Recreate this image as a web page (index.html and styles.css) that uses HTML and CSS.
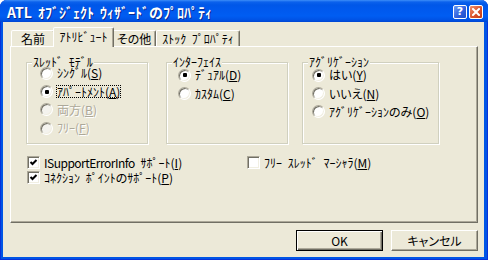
FILE: index.html
```html
<!DOCTYPE html>
<html lang="ja">
<head>
<meta charset="utf-8">
<title>ATL ｵﾌﾞｼﾞｪｸﾄ ｳｨｻﾞｰﾄﾞのﾌﾟﾛﾊﾟﾃｨ</title>
<link rel="stylesheet" href="styles.css">
</head>
<body>
<div class="window">
  <div class="titlebar">
    <span class="title">ATL ｵﾌﾞｼﾞｪｸﾄ ｳｨｻﾞｰﾄﾞのﾌﾟﾛﾊﾟﾃｨ</span>
    <span class="tb help">?</span>
    <span class="tb close"><svg width="8" height="8" viewBox="0 0 8 8"><path d="M1 1L7 7M7 1L1 7" stroke="#fff" stroke-width="2" stroke-linecap="square"/></svg></span>
  </div>
  <div class="client">
    <div class="tabs">
      <div class="tab t-name">名前</div>
      <div class="tab t-attr sel">ｱﾄﾘﾋﾞｭｰﾄ</div>
      <div class="tab t-misc">その他</div>
      <div class="tab t-stock">ｽﾄｯｸ ﾌﾟﾛﾊﾟﾃｨ</div>
    </div>
    <div class="panel">
      <div class="groups">
        <div class="grp g1">
          <span class="legend">ｽﾚｯﾄﾞ ﾓﾃﾞﾙ</span>
          <div class="opts">
            <div class="opt"><span class="rb"></span><span class="lbl">ｼﾝｸﾞﾙ(<u>S</u>)</span></div>
            <div class="opt"><span class="rb on"></span><span class="lbl focus">ｱﾊﾟｰﾄﾒﾝﾄ(<u>A</u>)</span></div>
            <div class="opt dis"><span class="rb"></span><span class="lbl">両方(<u>B</u>)</span></div>
            <div class="opt dis"><span class="rb"></span><span class="lbl">ﾌﾘｰ(<u>F</u>)</span></div>
          </div>
        </div>
        <div class="grp g2">
          <span class="legend">ｲﾝﾀｰﾌｪｲｽ</span>
          <div class="opts">
            <div class="opt"><span class="rb on"></span><span class="lbl">ﾃﾞｭｱﾙ(<u>D</u>)</span></div>
            <div class="opt"><span class="rb"></span><span class="lbl">ｶｽﾀﾑ(<u>C</u>)</span></div>
          </div>
        </div>
        <div class="grp g3">
          <span class="legend">ｱｸﾞﾘｹﾞｰｼｮﾝ</span>
          <div class="opts">
            <div class="opt"><span class="rb on"></span><span class="lbl">はい(<u>Y</u>)</span></div>
            <div class="opt"><span class="rb"></span><span class="lbl">いいえ(<u>N</u>)</span></div>
            <div class="opt"><span class="rb"></span><span class="lbl">ｱｸﾞﾘｹﾞｰｼｮﾝのみ(<u>O</u>)</span></div>
          </div>
        </div>
      </div>
      <div class="checks">
        <div class="chk"><span class="cb"><svg width="9" height="9" viewBox="0 0 9 9"><path d="M1.5 4L3.5 6L7.5 2" fill="none" stroke="#000" stroke-width="2"/></svg></span><span class="lbl"><span class="latin">ISupportErrorInfo</span> ｻﾎﾟｰﾄ(<u>I</u>)</span></div>
        <div class="chk"><span class="cb"></span><span class="lbl">ﾌﾘｰ ｽﾚｯﾄﾞ ﾏｰｼｬﾗ(<u>M</u>)</span></div>
        <div class="chk"><span class="cb"><svg width="9" height="9" viewBox="0 0 9 9"><path d="M1.5 4L3.5 6L7.5 2" fill="none" stroke="#000" stroke-width="2"/></svg></span><span class="lbl">ｺﾈｸｼｮﾝ ﾎﾟｲﾝﾄのｻﾎﾟｰﾄ(<u>P</u>)</span></div>
      </div>
    </div>
    <div class="buttons">
      <button class="btn def">OK</button>
      <button class="btn">キャンセル</button>
    </div>
  </div>
</div>
</body>
</html>
```
FILE: styles.css
```css
* { box-sizing: border-box; }
html, body { margin: 0; background: #ffffff; }
body {
  font-family: "Noto Sans CJK JP", "Noto Sans", sans-serif;
  font-size: 12px;
  font-feature-settings: "palt";
  word-spacing: 3px;
  color: #000;
}
.window {
  width: 488px;
  height: 260px;
  display: flex;
  flex-direction: column;
  background: #0055E5;
  border-radius: 7px 7px 0 0;
  overflow: hidden;
  box-shadow: inset 1px 0 #0831D9, inset -1px 0 #0831D9, inset 0 -1px #0831D9;
}
.titlebar {
  height: 22px;
  flex: none;
  display: flex;
  align-items: center;
  padding: 0 5px 0 7px;
  background: linear-gradient(to bottom, #3D8EF8 0px, #0B61EC 2px, #0057E8 5px, #005AEF 11px, #005DF2 16px, #0052E4 20px, #0046D2 22px);
}
.title {
  flex: 1;
  color: #fff;
  font-weight: bold;
  font-size: 14px;
  line-height: 16px;
  margin-top: 1px;
  text-shadow: 1px 1px #0A2A90;
  white-space: nowrap;
}
.tb {
  width: 14px;
  height: 14px;
  margin-top: 2px;
  border: 1px solid #fff;
  border-radius: 2px;
  display: flex;
  align-items: center;
  justify-content: center;
}
.help {
  background: linear-gradient(135deg, #6A9AF5, #2E5FDC 60%, #2350C8);
  color: #fff;
  font: bold 11px/12px "DejaVu Sans", sans-serif;
}
.close {
  margin-left: 2px;
  background: linear-gradient(135deg, #F0906E, #D9532C 55%, #C23C18);
}
.client {
  flex: 1;
  margin: 0 4px 3px 3px;
  background: #ECE9D8;
  padding: 5px 6px 0 7px;
  display: flex;
  flex-direction: column;
}
.tabs {
  display: flex;
  align-items: flex-end;
  height: 19px;
  padding-left: 1px;
  position: relative;
  z-index: 1;
}
.tab {
  height: 16px;
  border: 1px solid;
  border-bottom: none;
  border-color: #fff #716F64 transparent #fff;
  border-radius: 2px 2px 0 0;
  box-shadow: inset -1px 0 #ACA899;
  line-height: 15px;
  text-align: center;
  white-space: nowrap;
  background: #ECE9D8;
}
.t-name { width: 44px; }
.t-attr { width: 57px; }
.t-misc { width: 44px; }
.t-stock { width: 84px; }
.tab.sel {
  width: 61px;
  height: 20px;
  margin: 0 -2px -1px;
  line-height: 17px;
  position: relative;
  z-index: 2;
}
.panel {
  height: 177px;
  border: 1px solid;
  border-color: #fff #716F64 #716F64 #fff;
  box-shadow: inset -1px -1px #ACA899;
  padding: 15px 0 0 15px;
}
.groups {
  display: flex;
  align-items: flex-start;
}
.grp {
  height: 82px;
  border: 1px solid #D0D0BF;
  box-shadow: inset 1px 1px #fff, 1px 1px #fff;
}
.g1 { width: 122px; }
.g2 { width: 122px; margin-left: 18px; }
.g3 { width: 137px; margin-left: 14px; }
.legend {
  display: table;
  margin: -7px 0 0 5px;
  padding: 0 1px;
  line-height: 12px;
  background: #ECE9D8;
}
.opts { margin-top: -2px; }
.g1 .opts { margin-top: -4px; padding-left: 13px; }
.g2 .opts { padding-left: 11px; }
.g3 .opts { padding-left: 9px; }
.opt {
  display: flex;
  align-items: center;
  height: 18.4px;
  white-space: nowrap;
}
.rb {
  flex: none;
  width: 13px;
  height: 13px;
  border-radius: 50%;
  border: 1px solid;
  border-color: #ACA899 #fff #fff #ACA899;
  box-shadow: inset 1px 1px #716F64, inset -1px -1px #F1EFE2;
  background: #fff;
  display: flex;
  align-items: center;
  justify-content: center;
  margin-right: 4px;
}
.rb.on::after {
  content: "";
  width: 4px;
  height: 4px;
  border-radius: 1px;
  background: #000;
}
.dis .rb { background: #F4F3EE; }
.dis .lbl { color: #ACA899; text-shadow: 1px 1px #fff; }
.lbl { display: inline-block; line-height: 10px; }
.lbl u { text-underline-offset: 1px; }
.latin { letter-spacing: -0.5px; word-spacing: 0; }
.focus {
  border: 1px dotted #000;
  margin-left: -1px;
  line-height: 11px;
  padding: 0;
}
.checks {
  display: grid;
  grid-template-columns: 220px auto;
  margin-top: 11px;
  padding-left: 1px;
}
.chk {
  display: flex;
  align-items: center;
  height: 15px;
  white-space: nowrap;
}
.cb {
  flex: none;
  width: 13px;
  height: 13px;
  border: 1px solid;
  border-color: #ACA899 #fff #fff #ACA899;
  box-shadow: inset 1px 1px #716F64, inset -1px -1px #F1EFE2;
  background: #fff;
  display: flex;
  align-items: center;
  justify-content: center;
  margin-right: 4px;
}
.buttons {
  display: flex;
  justify-content: flex-end;
  gap: 8px;
  margin-top: 7px;
}
.btn {
  width: 87px;
  height: 21px;
  padding: 0;
  font: inherit;
  color: #000;
  background: #ECE9D8;
  border: 1px solid;
  border-color: #fff #716F64 #716F64 #fff;
  box-shadow: inset -1px -1px #ACA899;
}
.btn.def {
  border-color: #000;
  box-shadow: inset 1px 1px #fff, inset -1px -1px #716F64, inset -2px -2px #ACA899;
}
```
